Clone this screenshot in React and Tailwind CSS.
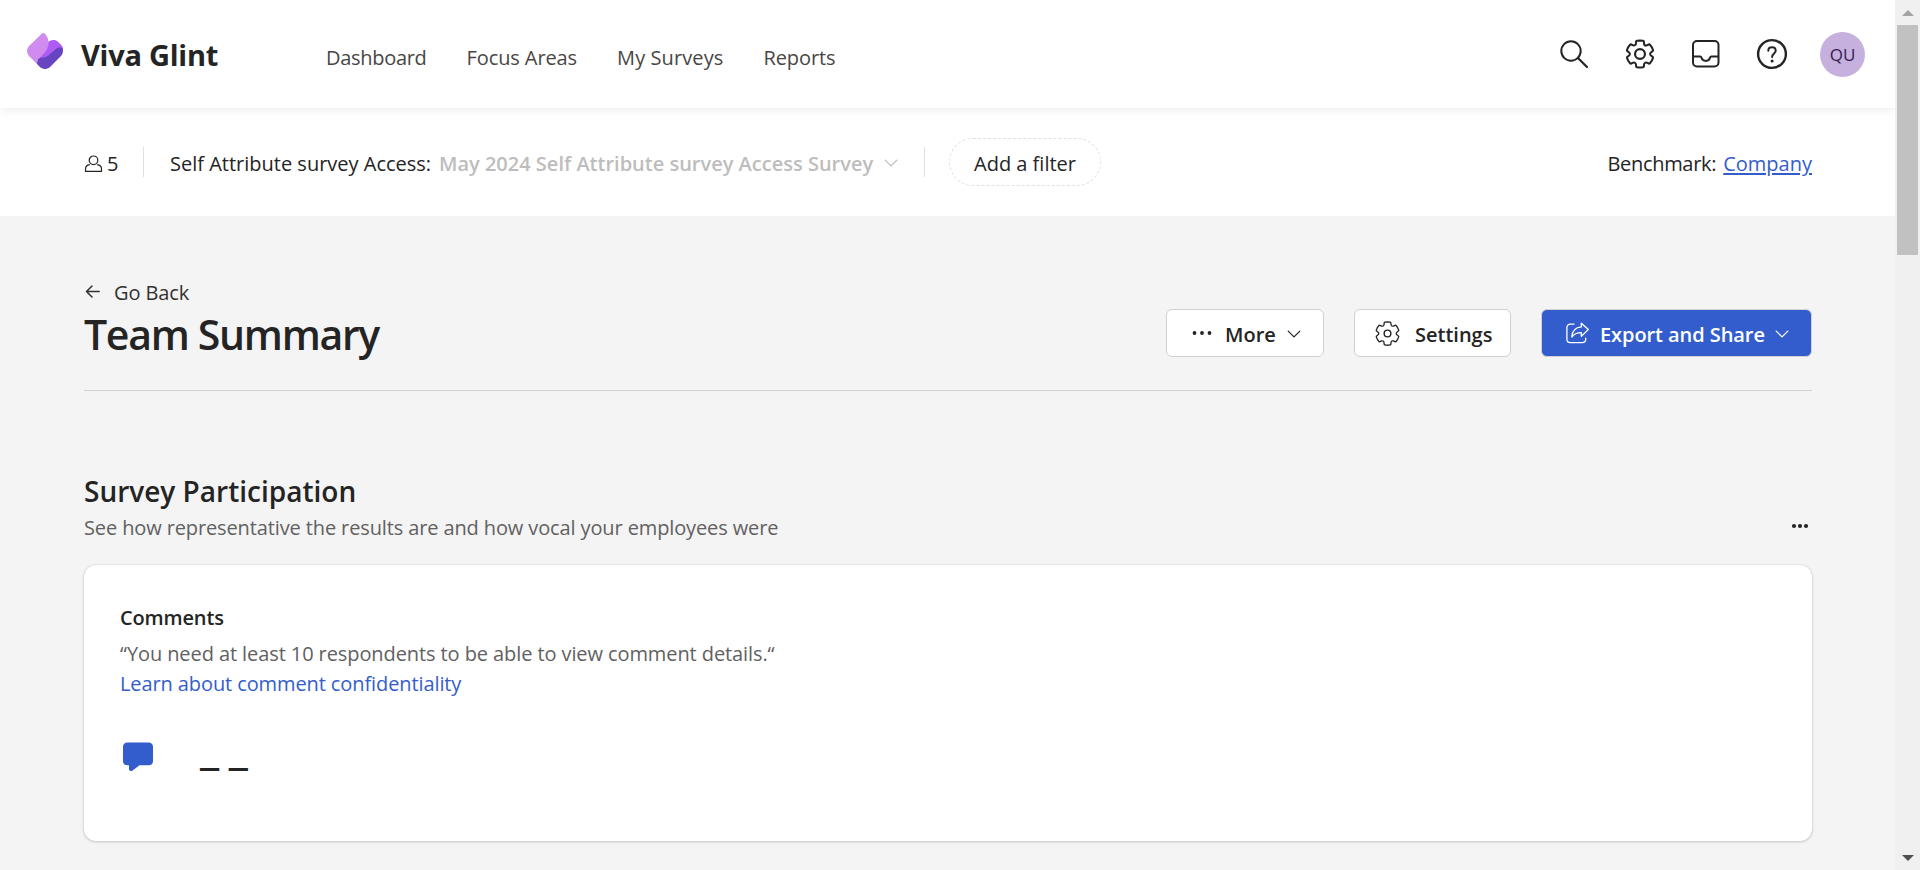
const GEAR =
  "M12.0122 2.25C12.7462 2.25846 13.4773 2.34326 14.1937 2.50304C14.5064 2.57279 14.7403 2.83351 14.7758 3.15196L14.946 4.67881C15.0231 5.37986 15.615 5.91084 16.3206 5.91158C16.5103 5.91188 16.6979 5.87238 16.8732 5.79483L18.2738 5.17956C18.5651 5.05159 18.9055 5.12136 19.1229 5.35362C20.1351 6.43464 20.8889 7.73115 21.3277 9.14558C21.4223 9.45058 21.3134 9.78203 21.0564 9.9715L19.8149 10.8866C19.4607 11.1468 19.2516 11.56 19.2516 11.9995C19.2516 12.4389 19.4607 12.8521 19.8157 13.1129L21.0582 14.0283C21.3153 14.2177 21.4243 14.5492 21.3297 14.8543C20.8911 16.2685 20.1377 17.5649 19.1261 18.6461C18.9089 18.8783 18.5688 18.9483 18.2775 18.8206L16.8712 18.2045C16.4688 18.0284 16.0068 18.0542 15.6265 18.274C15.2463 18.4937 14.9933 18.8812 14.945 19.3177L14.7759 20.8444C14.741 21.1592 14.5122 21.4182 14.204 21.4915C12.7556 21.8361 11.2465 21.8361 9.79803 21.4915C9.48991 21.4182 9.26105 21.1592 9.22618 20.8444L9.05736 19.32C9.00777 18.8843 8.75434 18.498 8.37442 18.279C7.99451 18.06 7.5332 18.0343 7.1322 18.2094L5.72557 18.8256C5.43422 18.9533 5.09403 18.8833 4.87678 18.6509C3.86462 17.5685 3.11119 16.2705 2.6732 14.8548C2.57886 14.5499 2.68786 14.2186 2.94485 14.0293L4.18818 13.1133C4.54232 12.8531 4.75147 12.4399 4.75147 12.0005C4.75147 11.561 4.54232 11.1478 4.18771 10.8873L2.94516 9.97285C2.6878 9.78345 2.5787 9.45178 2.67337 9.14658C3.11212 7.73215 3.86594 6.43564 4.87813 5.35462C5.09559 5.12236 5.43594 5.05259 5.72724 5.18056L7.12762 5.79572C7.53056 5.97256 7.9938 5.94585 8.37577 5.72269C8.75609 5.50209 9.00929 5.11422 9.05817 4.67764L9.22824 3.15196C9.26376 2.83335 9.49786 2.57254 9.8108 2.50294C10.5281 2.34342 11.26 2.25865 12.0122 2.25Z";

function GlintLogo() {
  return (
    <svg className="mb-[6px] size-9 shrink-0" viewBox="0 0 36 36">
      <path fill="#af5cf5" d="M20 10C23.5 6.3 28.5 6.3 31 8.8L34.5 12.3C35.5 13.4 36 15 36 17L20 28L10 27C16 21 20 17 20 10Z" />
      <path fill="#6845c0" d="M36 17.5C36 20 35.2 21.8 33.5 23.5L23.3 33.7C20 36.8 16 36.8 12.7 33.7L10 31C10 27 11 24.8 14 24.7C18 24.7 20.5 23.5 23 21L29 16C31 14.2 34.4 14.2 35.7 15.5Z" />
      <path fill="#cf8bee" d="M16.7 0C17.5 0 21.6 4 21.6 9.5C21.6 15.5 17.5 20.5 13 24C11 25.6 10 27.5 10 31L2.5 23.5C-0.8 20.2 -0.8 15.8 2.5 12.5L14.5 0.9C15.3 0 16 0 16.7 0Z" />
    </svg>
  );
}

function SearchIcon() {
  return (
    <svg className="size-9" viewBox="0 0 36 36" fill="none" stroke="#242424" strokeWidth="2" strokeLinecap="round">
      <circle cx="15" cy="15" r="9.7" />
      <path d="M22 22L31 31" strokeWidth="2.2" />
    </svg>
  );
}

function GearIcon({ className, strokeWidth, hub }) {
  return (
    <svg className={className} viewBox="0 0 24 24" fill="none" stroke="#242424" strokeWidth={strokeWidth} strokeLinejoin="round">
      <path d={GEAR} transform="translate(12 12) scale(.93) translate(-12 -12)" />
      <circle cx="12" cy="12" r={hub} />
    </svg>
  );
}

function InboxIcon() {
  return (
    <svg className="size-9" viewBox="0 0 36 36" fill="none" stroke="#242424" strokeWidth="2">
      <rect x="5" y="5" width="25.5" height="25.5" rx="4" />
      <path d="M5 20.6H12.2C12.9 20.6 13.3 21.1 13.5 21.8C14 23.7 15.6 24.9 17.8 24.9S21.5 23.7 22 21.8C22.2 21.1 22.6 20.6 23.3 20.6H30.5" />
    </svg>
  );
}

function HelpIcon() {
  return (
    <svg className="size-9" viewBox="0 0 36 36" fill="none" stroke="#242424" strokeWidth="2.4" strokeLinecap="round">
      <circle cx="18" cy="18" r="13.9" />
      <path d="M14.3 14.7C14.3 12.5 15.8 11.3 18 11.3S21.7 12.6 21.7 14.7C21.7 17.4 18.1 17.7 18.1 20.9" strokeWidth="2" />
      <circle cx="18.1" cy="25" r="1.5" fill="#242424" stroke="none" />
    </svg>
  );
}

function Chevron({ className }) {
  return (
    <svg className={className} viewBox="0 0 14 8" fill="none" stroke="currentColor" strokeWidth="1.3" strokeLinecap="round" strokeLinejoin="round">
      <path d="M1.2 1.1L7 6.9L12.8 1.1" />
    </svg>
  );
}

function Dots({ className, gap, r }) {
  return (
    <svg className={className} viewBox="0 0 20 6" fill="#242424">
      <circle cx={10 - gap} cy="3" r={r} />
      <circle cx="10" cy="3" r={r} />
      <circle cx={10 + gap} cy="3" r={r} />
    </svg>
  );
}

function Header() {
  return (
    <header className="relative z-10 flex h-[108px] shrink-0 items-center bg-white pr-[30px] pl-[27px] shadow-[0_4px_8px_-1px_rgba(40,60,80,0.08)]">
      <GlintLogo />
      <span className="ml-[18px] w-[245px] pt-[2px] text-[29px] leading-10 font-bold tracking-[-0.25px] whitespace-nowrap text-[#242424]">Viva Glint</span>
      <nav className="flex gap-[40px] pt-[8px] text-[20px] leading-7 whitespace-nowrap text-[#484644]">
        <a className="tracking-[-0.3px]">Dashboard</a>
        <a className="tracking-[-0.1px]">Focus Areas</a>
        <a className="tracking-[0.1px]">My Surveys</a>
        <a className="tracking-[-0.1px]">Reports</a>
      </nav>
      <div className="ml-auto flex items-center gap-[30px]">
        <SearchIcon />
        <GearIcon className="size-9" strokeWidth={1.45} hub={3.3} />
        <InboxIcon />
        <HelpIcon />
        <span className="flex size-[45px] items-center justify-center rounded-full bg-[#c6b1de] pt-px text-[17px] font-medium text-[#341a51]">QU</span>
      </div>
    </header>
  );
}

function FilterBar() {
  return (
    <div className="flex h-[108px] shrink-0 items-center bg-white pr-[83px] pl-[84px] text-[20px] leading-7 whitespace-nowrap text-[#242424]">
      <svg className="mt-[3px] h-[18px] w-[19px]" viewBox="0 0 19 18" fill="none" stroke="#242424" strokeWidth="1.2">
        <circle cx="9.5" cy="5.3" r="4.3" />
        <path d="M5.8 9.6C3 9.9 1.5 11.5 1.5 14V16.4H17.5V14C17.5 11.5 16 9.9 13.2 9.6" strokeLinejoin="round" />
      </svg>
      <span className="ml-[4px] w-[36px] pt-[4px]">5</span>
      <span className="h-[30px] w-px bg-[#e0e0e0]" />
      <span className="ml-[26px] w-[269px] pt-[4px]">Self Attribute survey Access:</span>
      <span className="w-[445px] pt-[4px] font-semibold text-[#bdbdbd]">May 2024 Self Attribute survey Access Survey</span>
      <Chevron className="mt-[2px] h-[8px] w-[14px] text-[#bdbdbd]" />
      <span className="ml-[26px] h-[30px] w-px bg-[#e0e0e0]" />
      <button className="ml-[24px] flex h-[48px] w-[152px] items-center justify-center rounded-full border border-dashed border-[#e0e0e0] pt-[4px]">
        Add a filter
      </button>
      <span className="ml-auto pt-[4px] tracking-[-0.3px]">Benchmark:</span>
      <a className="ml-[7px] pt-[4px] text-[#335dcd] underline decoration-2 underline-offset-[2px]">Company</a>
    </div>
  );
}

function PageTitle() {
  return (
    <div className="flex h-[175px] shrink-0 items-start justify-between border-b border-[#d1d1d1]">
      <div className="pt-[62px]">
        <a className="flex h-7 items-center text-[20px] leading-7 text-[#323130]">
          <svg className="h-[14px] w-[16px]" viewBox="0 0 16 14" fill="none" stroke="#323130" strokeWidth="1.5" strokeLinecap="round" strokeLinejoin="round">
            <path d="M8 1L2.5 6.5L8 12M2.5 6.5H15.2" />
          </svg>
          <span className="ml-[14px] pt-[2px] tracking-[-0.1px]">Go Back</span>
        </a>
        <h1 className="text-[41px] leading-[56px] font-[560] tracking-[-1.3px] text-[#242424]">Team Summary</h1>
      </div>
      <div className="flex gap-[30px] pt-[93px] text-[20px] leading-7 font-[570] whitespace-nowrap text-[#242424]">
        <button className="flex h-[48px] w-[158px] items-center rounded-[6px] border border-[#d1d1d1] bg-white pl-[25px] text-left">
          <Dots className="h-[6px] w-[20px]" gap={7.5} r={1.9} />
          <span className="ml-[13px] w-[62px] pt-[3px]">More</span>
          <Chevron className="mt-[2px] h-[8px] w-[14px]" />
        </button>
        <button className="flex h-[48px] w-[157px] items-center rounded-[6px] border border-[#d1d1d1] bg-white pl-[17px] text-left">
          <GearIcon className="size-[31px]" strokeWidth={1.1} hub={2.6} />
          <span className="ml-[12px] pt-[3px]">Settings</span>
        </button>
        <button className="flex h-[48px] w-[271px] items-center rounded-[6px] border border-[#d1d1d1] bg-[#335dcd] pl-[23px] text-left text-white">
          <svg className="h-[24px] w-[24px]" viewBox="0 0 24 24" fill="none" stroke="white" strokeWidth="1.3" strokeLinejoin="round" strokeLinecap="round">
            <path d="M9 3.2H5.3C3.3 3.2 1.9 4.6 1.9 6.6V18.2C1.9 20.2 3.3 21.6 5.3 21.6H17.3C19.3 21.6 20.7 20.2 20.7 18.2V17.2" />
            <path d="M16.3 2.2L23.3 8.6L16.3 15.3V11.6C12 11.5 9 13 6.8 16C7.2 10.5 10.5 6.4 16.3 5.9Z" />
          </svg>
          <span className="ml-[11px] w-[175px] pt-[3px] tracking-[-0.07px]">Export and Share</span>
          <Chevron className="mt-[2px] h-[8px] w-[14px]" />
        </button>
      </div>
    </div>
  );
}

function SurveyParticipation() {
  return (
    <section>
      <div className="flex items-end justify-between pt-[80px]">
        <div>
          <h2 className="text-[28px] leading-10 font-[560] text-[#242424]">Survey Participation</h2>
          <p className="mt-[3px] text-[20px] leading-7 tracking-[-0.12px] text-[#616161]">
            See how representative the results are and how vocal your employees were
          </p>
        </div>
        <Dots className="mr-[2px] mb-[13px] h-[6px] w-[20px]" gap={6} r={2.1} />
      </div>
      <div className="mt-[23px] h-[276px] rounded-[12px] bg-white px-[36px] pt-[38px] shadow-[0_0_2px_rgba(0,0,0,0.16),0_1px_3px_rgba(0,0,0,0.16)]">
        <h3 className="text-[20px] leading-[30px] font-[570] tracking-[-0.15px] text-[#242424]">Comments</h3>
        <p className="mt-[6px] text-[20px] leading-[30px] tracking-[-0.09px] text-[#616161]">
          “You need at least 10 respondents to be able to view comment details.“
        </p>
        <a className="block text-[20px] leading-[30px] tracking-[-0.1px] text-[#335dcd]">Learn about comment confidentiality</a>
        <div className="mt-[28px] flex items-start">
          <svg className="mt-[15px] ml-[2px] h-[30px] w-[32px]" viewBox="0 0 32 30" fill="#335dcd">
            <path d="M5.5 0.5H26.5C29.3 0.5 31 2.2 31 5V19C31 21.8 29.3 23.3 26.5 23.3H17.5L10.6 28.4C9 29.6 7 29 7 27V23.3H5.5C2.7 23.3 1 21.8 1 19V5C1 2.2 2.7 0.5 5.5 0.5Z" />
          </svg>
          <span className="ml-[46px] text-[45px] leading-[40px] font-semibold [word-spacing:-2px] text-[#242424]">_ _</span>
        </div>
      </div>
    </section>
  );
}

function Scrollbar() {
  return (
    <div className="flex w-[25px] shrink-0 flex-col items-center bg-[#f0f0f0]">
      <div className="flex h-[25px] items-center">
        <svg className="h-[6px] w-[12px]" viewBox="0 0 12 6" fill="#a3a3a3"><path d="M0 6L6 0L12 6Z" /></svg>
      </div>
      <div className="h-[230px] w-[21px] bg-[#c1c1c1]" />
      <div className="mt-auto flex h-[25px] items-center">
        <svg className="h-[6px] w-[12px]" viewBox="0 0 12 6" fill="#505050"><path d="M0 0L6 6L12 0Z" /></svg>
      </div>
    </div>
  );
}

export default function App() {
  return (
    <div className="flex h-[870px] w-[1920px] overflow-hidden font-['Open_Sans','Noto_Sans',sans-serif]">
      <div className="flex min-w-0 grow flex-col overflow-hidden bg-[#f4f4f4]">
        <Header />
        <FilterBar />
        <main className="flex flex-col pr-[83px] pl-[84px]">
          <PageTitle />
          <SurveyParticipation />
        </main>
      </div>
      <Scrollbar />
    </div>
  );
}
